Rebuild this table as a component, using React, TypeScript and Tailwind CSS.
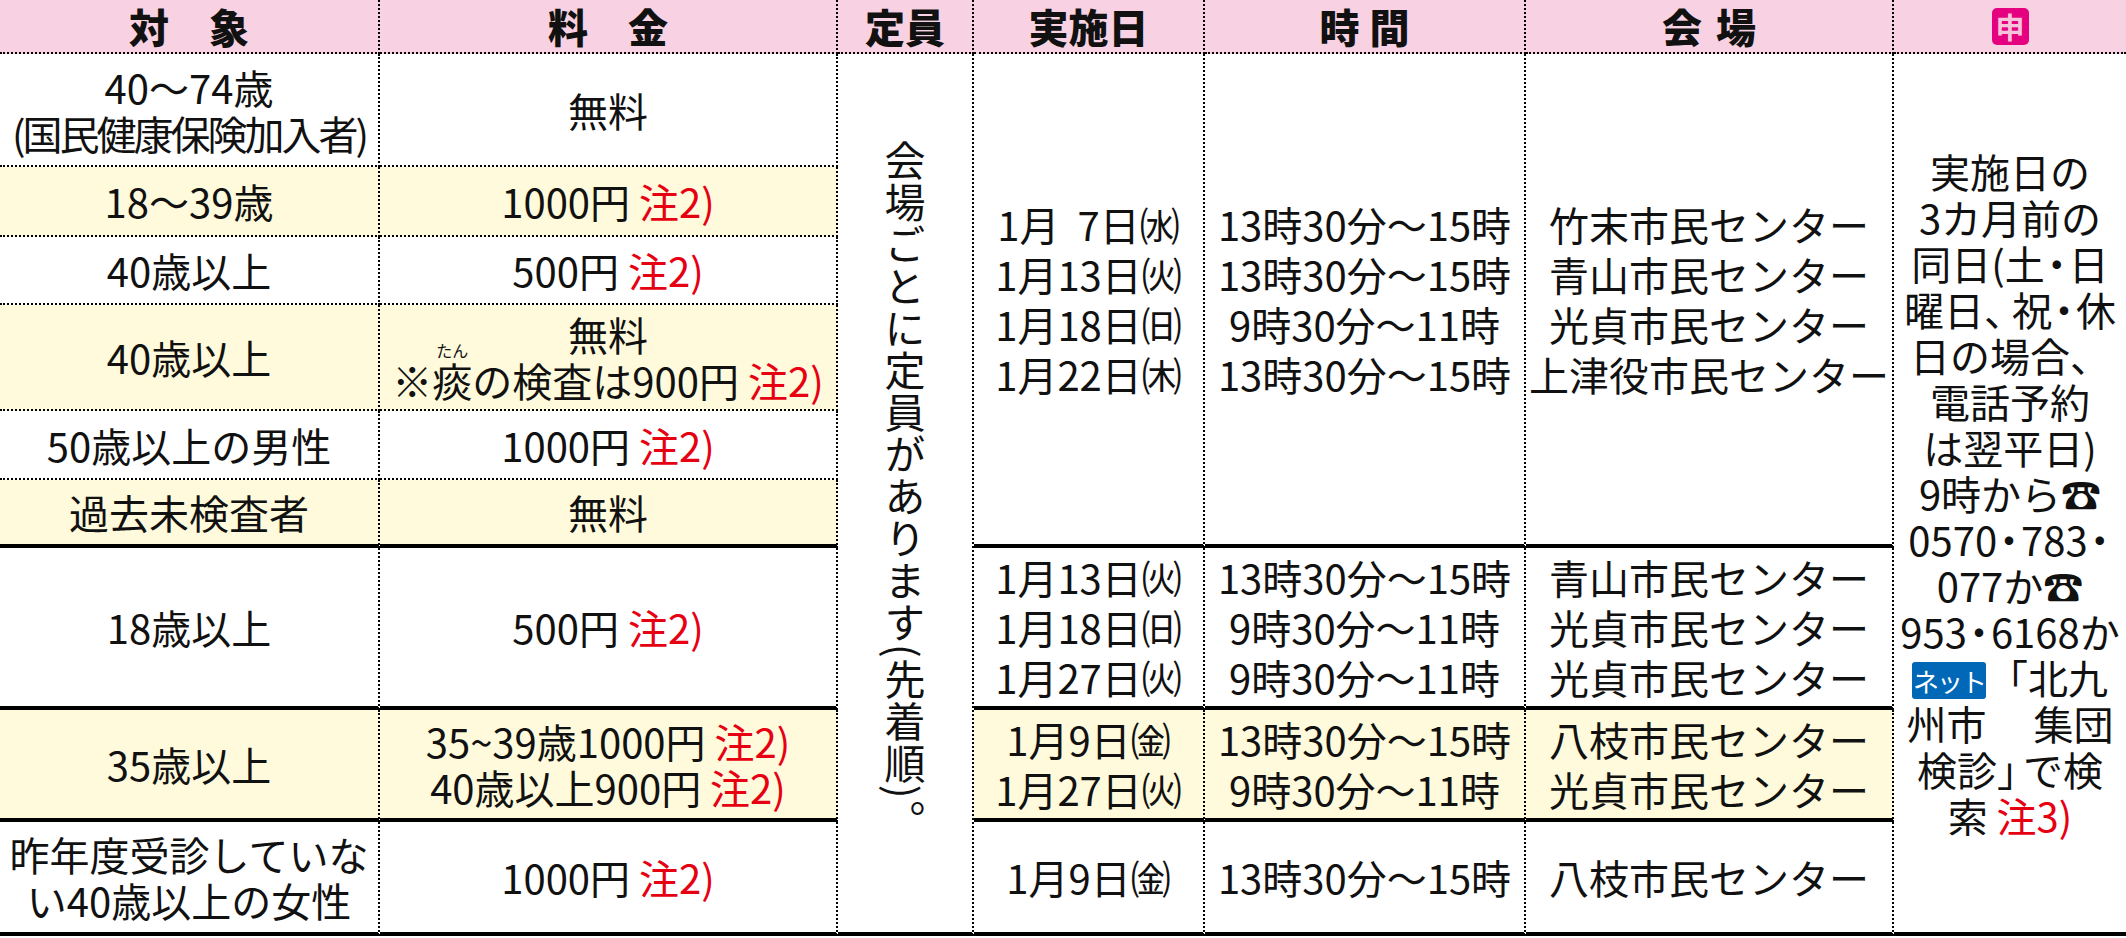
import React from "react";

const Note = ({ n }: { n: string }) => <span className="text-[#e60012]"> 注{n})</span>;
const Dot = () => <span className="mx-[-8px]">・</span>;
const Tel = () => <span>☎</span>;
const Line = ({ children }: { children: React.ReactNode }) => (
  <div className="h-[46px] leading-[46px] text-center whitespace-nowrap">{children}</div>
);

const head = "flex items-center justify-center font-black bg-[#f8d2e3] border-b-2 border-dotted border-black";
const thinRow = "border-r-2 border-b-2 border-dotted border-black";
const thickRow = "border-r-2 border-b-[4px] border-dotted [border-bottom-style:solid] border-black";
const cell = "flex flex-col items-center justify-center text-center";

const left = [
  {
    r: "row-start-2",
    line: thinRow,
    bg: "",
    a: (
      <>
        <div>40〜74歳</div>
        <div className="tracking-[-3px]">(国民健康保険加入者)</div>
      </>
    ),
    b: <div>無料</div>,
  },
  { r: "row-start-3", line: thinRow, bg: "bg-[#fefadb]", a: <div>18〜39歳</div>, b: <div>1000円<Note n="2" /></div> },
  { r: "row-start-4", line: thinRow, bg: "", a: <div>40歳以上</div>, b: <div>500円<Note n="2" /></div> },
  {
    r: "row-start-5",
    line: thinRow,
    bg: "bg-[#fefadb]",
    a: <div>40歳以上</div>,
    b: (
      <>
        <div>無料</div>
        <div>
          ※
          <span className="relative">
            痰
            <span className="absolute left-1/2 -translate-x-1/2 top-[-9px] text-[16px] leading-none whitespace-nowrap">たん</span>
          </span>
          の検査は900円<Note n="2" />
        </div>
      </>
    ),
  },
  { r: "row-start-6", line: thinRow, bg: "", a: <div>50歳以上の男性</div>, b: <div>1000円<Note n="2" /></div> },
  { r: "row-start-7", line: thickRow, bg: "bg-[#fefadb]", a: <div>過去未検査者</div>, b: <div>無料</div> },
  { r: "row-start-8", line: thickRow, bg: "", a: <div>18歳以上</div>, b: <div>500円<Note n="2" /></div> },
  {
    r: "row-start-9",
    line: thickRow,
    bg: "bg-[#fefadb]",
    a: <div>35歳以上</div>,
    b: (
      <>
        <div>35~39歳1000円<Note n="2" /></div>
        <div>40歳以上900円<Note n="2" /></div>
      </>
    ),
  },
  {
    r: "row-start-10",
    line: thickRow,
    bg: "",
    a: (
      <>
        <div>昨年度受診していな</div>
        <div>い40歳以上の女性</div>
      </>
    ),
    b: <div>1000円<Note n="2" /></div>,
  },
];

const groups = [
  {
    r: "row-start-2 row-span-6",
    bg: "",
    rows: [
      [<>1月<span className="inline-block w-[18px]" />7日㈬</>, "13時30分〜15時", "竹末市民センター"],
      [<>1月13日㈫</>, "13時30分〜15時", "青山市民センター"],
      [<>1月18日㈰</>, "9時30分〜11時", "光貞市民センター"],
      [<>1月22日㈭</>, "13時30分〜15時", "上津役市民センター"],
    ],
  },
  {
    r: "row-start-8",
    bg: "",
    rows: [
      [<>1月13日㈫</>, "13時30分〜15時", "青山市民センター"],
      [<>1月18日㈰</>, "9時30分〜11時", "光貞市民センター"],
      [<>1月27日㈫</>, "9時30分〜11時", "光貞市民センター"],
    ],
  },
  {
    r: "row-start-9",
    bg: "bg-[#fefadb]",
    rows: [
      [<>1月9日㈮</>, "13時30分〜15時", "八枝市民センター"],
      [<>1月27日㈫</>, "9時30分〜11時", "光貞市民センター"],
    ],
  },
  {
    r: "row-start-10",
    bg: "",
    rows: [[<>1月9日㈮</>, "13時30分〜15時", "八枝市民センター"]],
  },
];

const groupCols = ["col-start-4", "col-start-5", "col-start-6"];

export default function App() {
  return (
    <div className="w-[2126px] h-[938px] bg-white text-[#111] font-['Noto_Sans_CJK_JP','Noto_Sans',sans-serif] text-[40px] leading-[46px]">
      <div className="grid grid-cols-[380px_458px_136px_231px_321px_368px_232px] grid-rows-[54px_113px_70px_68px_106px_69px_68px_162px_112px_114px]">
        {/* header */}
        <div className={`${head} col-start-1 row-start-1 border-r-2`}>対　象</div>
        <div className={`${head} col-start-2 row-start-1 border-r-2`}>料　金</div>
        <div className={`${head} col-start-3 row-start-1 border-r-2`}>定員</div>
        <div className={`${head} col-start-4 row-start-1 border-r-2`}>実施日</div>
        <div className={`${head} col-start-5 row-start-1 border-r-2`}>
          時<span className="ml-[10px]">間</span>
        </div>
        <div className={`${head} col-start-6 row-start-1 border-r-2`}>
          会<span className="ml-[14px]">場</span>
        </div>
        <div className={`${head} col-start-7 row-start-1`}>
          <span className="flex w-[37px] h-[37px] items-center justify-center rounded-[5px] bg-[#e4007f] text-[29px] font-bold leading-none text-[#f6c4da]">
            申
          </span>
        </div>

        {/* target / fee columns */}
        {left.map((row, i) => (
          <React.Fragment key={i}>
            <div className={`${cell} whitespace-nowrap ${row.line} ${row.bg} ${row.r} col-start-1`}>{row.a}</div>
            <div className={`${cell} whitespace-nowrap ${row.line} ${row.bg} ${row.r} col-start-2`}>{row.b}</div>
          </React.Fragment>
        ))}

        {/* capacity */}
        <div className={`${cell} col-start-3 row-start-2 row-span-9 border-r-2 border-b-[4px] border-dotted [border-bottom-style:solid] border-black`}>
          <div className="[writing-mode:vertical-rl] text-[41px] leading-[40px] tracking-[1px] mb-[4px]">
            会場ごとに定員があります(先着順)。
          </div>
        </div>

        {/* dates / times / venues */}
        {groups.map((g, gi) =>
          groupCols.map((c, ci) => (
            <div
              key={`${gi}-${ci}`}
              className={`${cell} ${g.r} ${c} ${g.bg} leading-[50px] border-r-2 border-b-[4px] border-dotted [border-bottom-style:solid] border-black`}
            >
              {g.rows.map((line, li) => (
                <div key={li} className="whitespace-nowrap">
                  {line[ci]}
                </div>
              ))}
            </div>
          ))
        )}

        {/* application */}
        <div className={`${cell} col-start-7 row-start-2 row-span-9 border-b-[4px] border-solid border-black`}>
          <Line>実施日の</Line>
          <Line>3カ月前の</Line>
          <Line>同日(土<Dot />日</Line>
          <Line>
            曜日<span className="mr-[-12px]">、</span>祝<Dot />休
          </Line>
          <Line>日の場合、</Line>
          <Line>電話予約</Line>
          <Line>は翌平日)</Line>
          <Line>9時から<Tel /></Line>
          <Line>0570<Dot />783<Dot /></Line>
          <Line>077か<Tel /></Line>
          <Line>953<Dot />6168か</Line>
          <Line>
            <span className="inline-block align-middle w-[74px] h-[37px] rounded-[3px] bg-[#0068b7] text-white text-[26px] leading-[37px] tracking-[-2px] mr-[2px] mt-[-6px]">
              ネット
            </span>
            「北九
          </Line>
          <Line>
            州市<span className="inline-block w-[47px]" />集団
          </Line>
          <Line>
            検診<span className="mr-[-14px]">」</span>で検
          </Line>
          <Line>
            索<Note n="3" />
          </Line>
        </div>
      </div>
    </div>
  );
}
